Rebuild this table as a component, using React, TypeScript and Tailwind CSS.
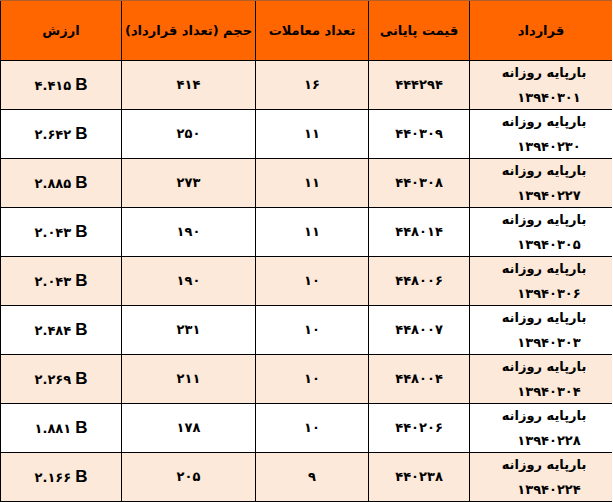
const rows = [
  { value: "۴.۴۱۵", volume: "۴۱۴", count: "۱۶", price: "۴۴۴۲۹۴", date: "۱۳۹۴۰۳۰۱" },
  { value: "۲.۶۴۲", volume: "۲۵۰", count: "۱۱", price: "۴۴۰۳۰۹", date: "۱۳۹۴۰۲۳۰" },
  { value: "۲.۸۸۵", volume: "۲۷۳", count: "۱۱", price: "۴۴۰۳۰۸", date: "۱۳۹۴۰۲۲۷" },
  { value: "۲.۰۴۳", volume: "۱۹۰", count: "۱۱", price: "۴۴۸۰۱۴", date: "۱۳۹۴۰۳۰۵" },
  { value: "۲.۰۴۳", volume: "۱۹۰", count: "۱۰", price: "۴۴۸۰۰۶", date: "۱۳۹۴۰۳۰۶" },
  { value: "۲.۴۸۴", volume: "۲۳۱", count: "۱۰", price: "۴۴۸۰۰۷", date: "۱۳۹۴۰۳۰۳" },
  { value: "۲.۲۶۹", volume: "۲۱۱", count: "۱۰", price: "۴۴۸۰۰۴", date: "۱۳۹۴۰۳۰۴" },
  { value: "۱.۸۸۱", volume: "۱۷۸", count: "۱۰", price: "۴۴۰۲۰۶", date: "۱۳۹۴۰۲۲۸" },
  { value: "۲.۱۶۶", volume: "۲۰۵", count: "۹", price: "۴۴۰۲۳۸", date: "۱۳۹۴۰۲۲۴" },
]

const headers = ["قرارداد", "قیمت پایانی", "تعداد معاملات", "حجم (تعداد قرارداد)", "ارزش"]

export default function App() {
  return (
    <div className="min-h-screen bg-white font-['DejaVu_Sans',sans-serif] text-black">
      <div
        dir="rtl"
        className="grid w-[612px] grid-cols-[143px_101px_113px_134px_121px] border-t border-[#b0602a]"
      >
        {headers.map((h) => (
          <div
            key={h}
            className="flex h-[60px] items-center justify-center border-b border-l border-black bg-[#ff6600] text-[13px] font-bold"
          >
            {h}
          </div>
        ))}

        {rows.map((row, i) => {
          const bg = i % 2 === 0 ? "bg-[#fde9d9]" : "bg-white"
          const cell = `flex h-[49px] items-center justify-center border-b border-l border-black text-[13px] font-bold ${bg}`
          return (
            <div key={row.date} className="contents">
              <div
                className={`flex h-[49px] flex-col items-center justify-between border-b border-l border-black pb-[1px] pl-[16px] pt-[2px] text-[13px] font-bold leading-[20px] ${bg}`}
              >
                <span className="pr-[10px]">بارپایه روزانه</span>
                <span>{row.date}</span>
              </div>
              <div className={cell}>{row.price}</div>
              <div className={cell}>{row.count}</div>
              <div className={cell}>{row.volume}</div>
              <div className={cell}>
                <span dir="ltr" className="flex items-baseline gap-[4px]">
                  <span>{row.value}</span>
                  <span className="font-['Liberation_Sans',sans-serif] text-[17px]">B</span>
                </span>
              </div>
            </div>
          )
        })}
      </div>
    </div>
  )
}
